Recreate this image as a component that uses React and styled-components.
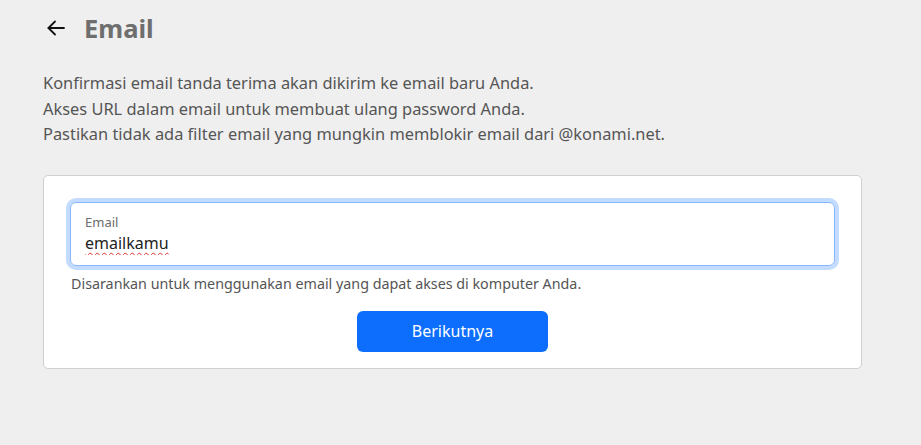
import React from 'react';
import styled, { createGlobalStyle } from 'styled-components';

const GlobalStyle = createGlobalStyle`
  body {
    margin: 0;
    background: #efefef;
    font-family: "Noto Sans", "Open Sans", sans-serif;
    color: #555;
  }
`;

const Page = styled.div`
  padding: 8px 60px 40px 43px;
  width: 819px;
`;

const Header = styled.div`
  display: flex;
  align-items: center;
  gap: 18px;
  height: 40px;
  padding-left: 3px;
  margin-bottom: 22px;
`;

const BackButton = styled.button`
  display: flex;
  align-items: center;
  justify-content: center;
  padding: 0;
  border: none;
  background: none;
  cursor: pointer;
  color: #111;
`;

const Title = styled.h1`
  margin: 0;
  font-size: 25.5px;
  font-weight: 700;
  color: #6e6e6e;
`;

const Notes = styled.div`
  font-size: 16.4px;
  line-height: 25.5px;
  color: #555;
  margin-bottom: 28px;
`;

const Card = styled.div`
  background: #fff;
  border: 1px solid #cfcfcf;
  border-radius: 5px;
  padding: 26px 26px 16px;
  display: flex;
  flex-direction: column;
`;

const Field = styled.label`
  display: flex;
  flex-direction: column;
  height: 64px;
  box-sizing: border-box;
  padding: 10px 14px 0;
  border: 1px solid #86b7fe;
  border-radius: 6px;
  box-shadow: 0 0 0 4px rgba(13, 110, 253, 0.25);
`;

const FieldLabel = styled.span`
  font-size: 13px;
  line-height: 18px;
  color: #6c6c6c;
`;

const FieldInput = styled.input`
  border: none;
  outline: none;
  padding: 0;
  font-family: inherit;
  font-size: 16px;
  line-height: 24px;
  color: #222;
  text-decoration: underline wavy #e03030;
  text-decoration-thickness: 1px;
  text-underline-offset: 3px;
  background: transparent;
`;

const Hint = styled.p`
  margin: 8px 0 0 1px;
  font-size: 14.3px;
  line-height: 19px;
  color: #555;
`;

const SubmitButton = styled.button`
  align-self: center;
  margin-top: 18px;
  width: 191px;
  height: 41px;
  border: none;
  border-radius: 6px;
  background: #0d6efd;
  color: #fff;
  font-family: inherit;
  font-size: 16px;
  cursor: pointer;
`;

const ArrowLeft = () => (
  <svg width="20" height="20" viewBox="0 0 20 20" fill="none" stroke="currentColor" strokeWidth="1.8" strokeLinecap="round" strokeLinejoin="round">
    <path d="M18 10H2.5" />
    <path d="M9 3.5L2.5 10 9 16.5" />
  </svg>
);

const App = () => {
  return (
    <>
      <GlobalStyle />
      <Page>
        <Header>
          <BackButton aria-label="back">
            <ArrowLeft />
          </BackButton>
          <Title>Email</Title>
        </Header>
        <Notes>
          <div>Konfirmasi email tanda terima akan dikirim ke email baru Anda.</div>
          <div>Akses URL dalam email untuk membuat ulang password Anda.</div>
          <div>Pastikan tidak ada filter email yang mungkin memblokir email dari @konami.net.</div>
        </Notes>
        <Card>
          <Field>
            <FieldLabel>Email</FieldLabel>
            <FieldInput defaultValue="emailkamu" />
          </Field>
          <Hint>Disarankan untuk menggunakan email yang dapat akses di komputer Anda.</Hint>
          <SubmitButton>Berikutnya</SubmitButton>
        </Card>
      </Page>
    </>
  );
};

export default App;
